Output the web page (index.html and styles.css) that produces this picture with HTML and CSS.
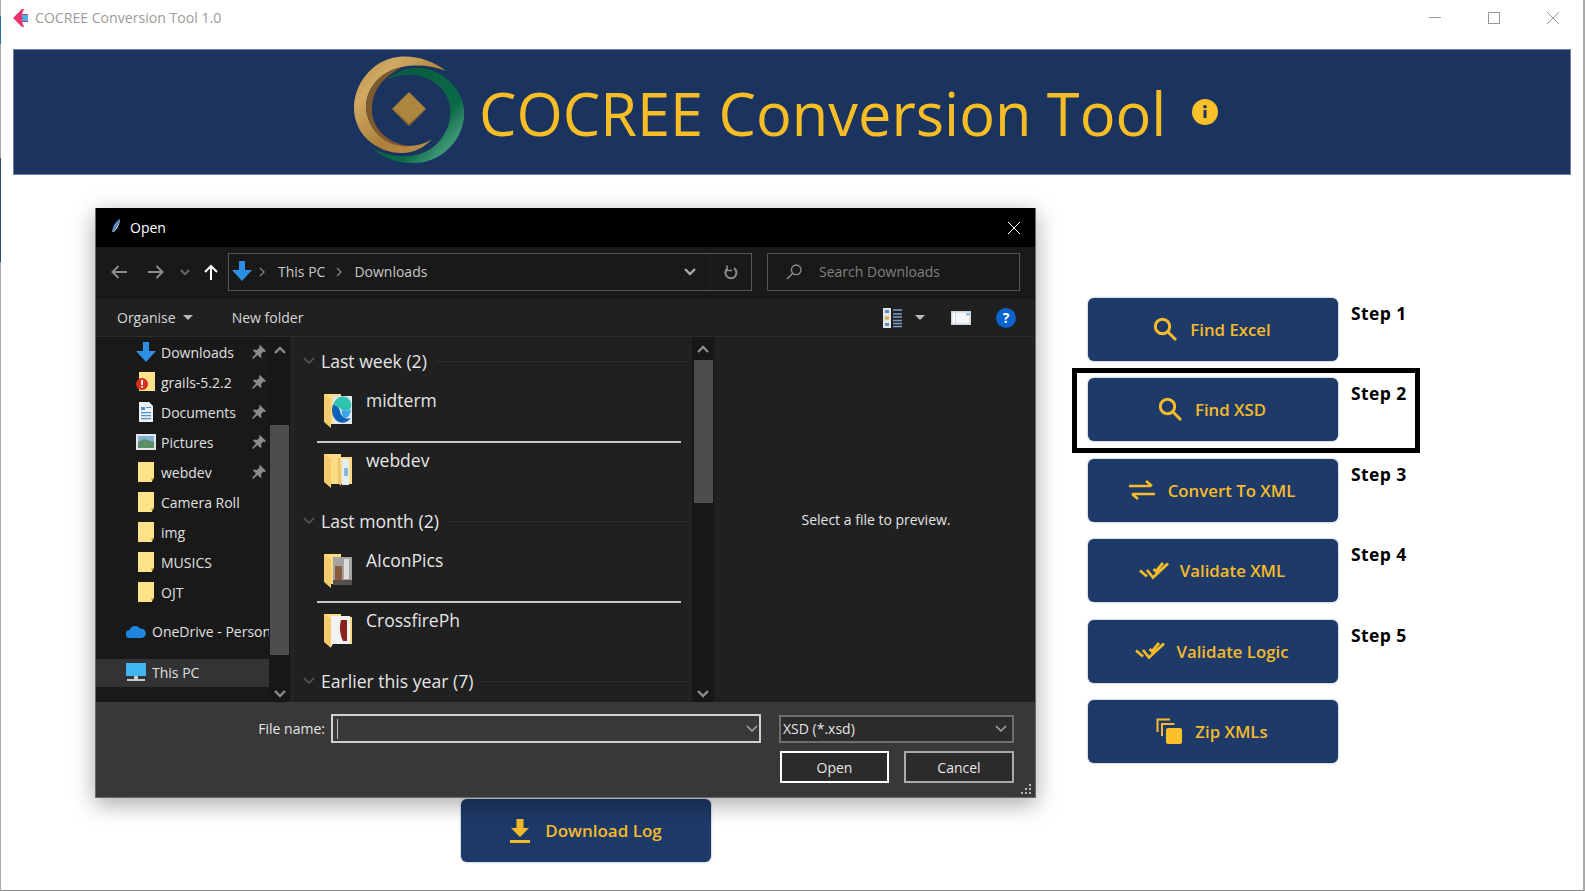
FILE: index.html
```html
<!DOCTYPE html>
<html lang="en">
<head>
<meta charset="utf-8">
<title>COCREE Conversion Tool 1.0</title>
<link rel="stylesheet" href="styles.css">
</head>
<body>
<svg class="defs" width="0" height="0" aria-hidden="true">
  <defs>
    <symbol id="i-folder" viewBox="0 0 16 20"><path d="M0 0h16v16h-2v4H0z" fill="#fde28a"/><path d="M13 16h3l-2 3.500z" fill="#d7ad4a"/></symbol>
    <symbol id="i-pin" viewBox="0 0 14 14"><path d="M8 0l6 6-1 1-1.500-.5L9 9l.5 3-1 1-3-3L1 14l-1-1 4-4.500-3-3 1-1 3 .5L7.500 2.500 7 1z" fill="#8a8a8a"/></symbol>
    <symbol id="i-down" viewBox="0 0 20 20"><path d="M7 0h6v9h7L10 20 0 9h7z" fill="#2b8fe6"/></symbol>
    <symbol id="i-search" viewBox="0 0 24 24"><circle cx="9.500" cy="9.500" r="7.200" fill="none" stroke="#f5bb2a" stroke-width="3"/><path d="M14.800 14.800L23 23" stroke="#f5bb2a" stroke-width="3" fill="none"/></symbol>
    <symbol id="i-check" viewBox="0 0 30 18"><path d="M1 8.500l7 6M8 8l6 7.500L29 1.500M14.500 7l2.500 2.500L24 1" stroke="#f5bb2a" stroke-width="2.800" fill="none"/></symbol>
    <symbol id="i-fback" viewBox="0 0 28 35"><path d="M0 1h17v3h11v27H6z" fill="#fbdc85"/><path d="M0 1l7 5v29L0 29z" fill="#f4cc6c"/></symbol>
    <symbol id="i-chev" viewBox="0 0 12 8"><path d="M1 1l5 5 5-5" fill="none" stroke="currentColor" stroke-width="1.500"/></symbol>
    <symbol id="i-chev-b" viewBox="0 0 12 8"><path d="M1 1l5 5 5-5" fill="none" stroke="currentColor" stroke-width="2.400"/></symbol>
    <symbol id="i-chev-u" viewBox="0 0 12 8"><path d="M1 7l5-5 5 5" fill="none" stroke="currentColor" stroke-width="2.400"/></symbol>
    <symbol id="i-crumb" viewBox="0 0 6 10"><path d="M1 1l4 4-4 4" fill="none" stroke="#7d7d7d" stroke-width="1.400"/></symbol>
  </defs>
</svg>

<div class="window">
  <header class="titlebar">
    <svg class="app-icon" viewBox="0 0 15 18"><path d="M0 9L9 0h2l-2 5 6 0v8H9l2 5H9z" fill="#e8336d"/><path d="M8 6h7v6H8l2-3z" fill="#45b4e8"/></svg>
    <span class="app-title">COCREE Conversion Tool 1.0</span>
    <div class="win-controls">
      <svg viewBox="0 0 12 12"><path d="M0 5.500h12" stroke="#999" stroke-width="1"/></svg>
      <svg viewBox="0 0 12 12"><rect x=".5" y=".5" width="11" height="11" fill="none" stroke="#999"/></svg>
      <svg viewBox="0 0 12 12"><path d="M0 0l12 12M12 0L0 12" stroke="#999" stroke-width="1"/></svg>
    </div>
  </header>

  <section class="banner">
    <svg class="logo" viewBox="350 52 118 114">
      <defs>
        <linearGradient id="gold" x1="0" y1="0" x2="1" y2="1"><stop offset="0" stop-color="#b58c45"/><stop offset=".25" stop-color="#d0a962"/><stop offset=".6" stop-color="#ab7f3a"/><stop offset="1" stop-color="#c2964e"/></linearGradient>
        <linearGradient id="green" x1="0" y1="0" x2="1" y2="1"><stop offset="0" stop-color="#07593c"/><stop offset=".65" stop-color="#0a6a47"/><stop offset=".82" stop-color="#3f9675"/><stop offset="1" stop-color="#0a5f40"/></linearGradient>
      </defs>
      <path d="M386 80C400 68 420 64 436 72C456 82 466 100 464 118C461 144 438 164 412 163C396 163 382 157 372 148C392 159 416 159 432 148C446 137 452 122 450 106C447 88 430 76 414 75C404 74 395 76 386 80Z" fill="url(#green)"/>
      <path d="M446 71C432 60 414 55 398 57C372 60 354 84 354 108C354 134 376 153 402 153C414 153 425 147 432 139C422 146 410 147 398 145C380 142 366 124 366 106C367 86 382 71 402 67C418 64 434 66 446 71Z" fill="url(#gold)"/>
      <path d="M366 106C367 86 382 71 402 67C394 72 373 82 372 108C371 126 386 144 410 146C404 147 401 146 398 145C380 142 366 124 366 106Z" fill="#7f5a2e"/>
      <path d="M409 92l17 17-17 17-17-17z" fill="#ad853c"/>
      <path d="M426 109l-17 17-17-17 1 0 16 15 16-15z" fill="#7e5c2a"/>
    </svg>
    <h1 class="banner-title">COCREE Conversion Tool</h1>
    <svg class="info" viewBox="0 0 26 26"><circle cx="13" cy="13" r="13" fill="#fcc02a"/><rect x="11.500" y="11" width="3" height="8" fill="#1a335f"/><circle cx="13" cy="7.800" r="1.800" fill="#1a335f"/></svg>
  </section>

  <main class="workspace">
    <div class="left-area">
      <button class="action download-btn" type="button">
        <svg class="ico-dl" viewBox="0 0 20 24"><path d="M6.500 0h7v9H19l-9 9-9-9h5.500z" fill="#f5bb2a"/><rect x="0" y="21" width="20" height="3" fill="#f5bb2a"/></svg>
        Download Log
      </button>
    </div>

    <div class="steps">
      <div class="step">
        <button class="action" type="button"><svg class="ico"><use href="#i-search"/></svg>Find Excel</button>
        <span class="step-label">Step 1</span>
      </div>
      <div class="step">
        <div class="highlight"></div>
        <button class="action" type="button"><svg class="ico"><use href="#i-search"/></svg>Find XSD</button>
        <span class="step-label">Step 2</span>
      </div>
      <div class="step">
        <button class="action" type="button">
          <svg class="ico-wide" viewBox="0 0 26 20"><path d="M0 6h22M17 1l6 5M26 14H3M9 19l-6-5" fill="none" stroke="#f5bb2a" stroke-width="2.600"/></svg>
          Convert To XML</button>
        <span class="step-label">Step 3</span>
      </div>
      <div class="step">
        <button class="action" type="button"><svg class="ico-check"><use href="#i-check"/></svg>Validate XML</button>
        <span class="step-label">Step 4</span>
      </div>
      <div class="step">
        <button class="action" type="button"><svg class="ico-check"><use href="#i-check"/></svg>Validate Logic</button>
        <span class="step-label">Step 5</span>
      </div>
      <div class="step">
        <button class="action" type="button">
          <svg class="ico-zip" viewBox="0 0 26 26"><path d="M1.500 14V1.500H14M6 18V6h12.500" fill="none" stroke="#f5bb2a" stroke-width="2"/><rect x="10" y="10" width="16" height="16" rx="2" fill="#fcc02a"/></svg>
          Zip XMLs</button>
      </div>
    </div>

    <div class="dialog">
      <div class="dlg-title">
        <svg class="feather" viewBox="0 0 10 14"><path d="M9 0C5 2 2 6 1 13l1 0C4 9 8 5 9 0z" fill="#4d8fd0"/><path d="M9 0C8 4 5 9 2 13l1 0C6 10 9 5 9 0z" fill="#c8dcef"/></svg>
        <span>Open</span>
        <svg class="dlg-close" viewBox="0 0 12 12"><path d="M0 0l12 12M12 0L0 12" stroke="#fff" stroke-width="1"/></svg>
      </div>

      <div class="dlg-nav">
        <svg class="nav-arrow nav-back" viewBox="0 0 16 14"><path d="M16 7H2M7.500 1L1.500 7l6 6" fill="none" stroke="#8c8c8c" stroke-width="2"/></svg>
        <svg class="nav-arrow nav-fwd" viewBox="0 0 16 14"><path d="M0 7h14M8.500 1l6 6-6 6" fill="none" stroke="#8c8c8c" stroke-width="2"/></svg>
        <svg class="nav-drop"><use href="#i-chev-b"/></svg>
        <svg class="nav-up" viewBox="0 0 14 16"><path d="M7 16V2M1 8l6-6 6 6" fill="none" stroke="#fff" stroke-width="2"/></svg>
        <div class="address">
          <svg class="addr-icon"><use href="#i-down"/></svg>
          <svg class="crumb"><use href="#i-crumb"/></svg>
          <span>This PC</span>
          <svg class="crumb"><use href="#i-crumb"/></svg>
          <span>Downloads</span>
          <svg class="addr-chev"><use href="#i-chev-b"/></svg>
          <div class="addr-refresh">
            <svg viewBox="0 0 14 15"><path d="M3.500 3.500A5.500 5.500 0 1 0 10 3.200" fill="none" stroke="#8c8c8c" stroke-width="2"/><path d="M3 .5v5h5" fill="none" stroke="#8c8c8c" stroke-width="1.600"/></svg>
          </div>
        </div>
        <div class="search">
          <svg viewBox="0 0 16 16"><circle cx="10.200" cy="5.800" r="4.800" fill="none" stroke="#8c8c8c" stroke-width="1.300"/><path d="M6.800 9.200L1 15" stroke="#8c8c8c" stroke-width="1.500"/></svg>
          <span>Search Downloads</span>
        </div>
      </div>

      <div class="dlg-tools">
        <span class="tool-text">Organise</span><i class="caret"></i>
        <span class="tool-text new-folder">New folder</span>
        <svg class="view-icon" viewBox="0 0 20 20"><rect width="8" height="20" fill="#e6e6e6"/><rect x="2" y="2" width="4" height="3" fill="#5a8fc8"/><rect x="2" y="8.500" width="4" height="3" fill="#d6a548"/><rect x="2" y="15" width="4" height="3" fill="#5a8fc8"/><path d="M10 2h9M10 6h9M10 9h9M10 12.500h9M10 15.500h9M10 18.500h9" stroke="#7e9fc8" stroke-width="1.400"/></svg>
        <i class="caret caret-view"></i>
        <svg class="pane-icon" viewBox="0 0 20 14"><rect width="20" height="14" fill="#cfd3d8"/><rect x="5" y="1.500" width="13.500" height="11" fill="#f4f7fb"/><rect x="1.500" y="1.500" width="2.500" height="11" fill="#fff"/><rect x="15.500" y="2" width="3" height="2.500" fill="#7fb0e6"/></svg>
        <svg class="help-icon" viewBox="0 0 20 20"><circle cx="10" cy="10" r="10" fill="#0a63cf"/><text x="10" y="15" text-anchor="middle" class="help-q">?</text></svg>
      </div>

      <div class="dlg-body">
        <nav class="tree">
          <ul class="tree-list">
            <li class="tree-row"><svg class="tree-ico"><use href="#i-down"/></svg><span>Downloads</span><svg class="pin"><use href="#i-pin"/></svg></li>
            <li class="tree-row">
              <svg class="tree-ico" viewBox="0 0 20 20"><path d="M3 0h16v19H3z" fill="#fde28a"/><circle cx="6" cy="12" r="6" fill="#d6301f"/><rect x="5.200" y="8" width="1.800" height="5" fill="#fff"/><rect x="5.200" y="14" width="1.800" height="1.800" fill="#fff"/></svg>
              <span>grails-5.2.2</span><svg class="pin"><use href="#i-pin"/></svg></li>
            <li class="tree-row">
              <svg class="tree-ico" viewBox="0 0 20 20"><path d="M3 0h10l4 4v16H3z" fill="#eef0f3"/><path d="M5 5h4v3H5zM10 5h5v1H10zM5 10h10v1.200H5zM5 13h10v1.200H5zM5 16h10v1.200H5z" fill="#4f93cf"/></svg>
              <span>Documents</span><svg class="pin"><use href="#i-pin"/></svg></li>
            <li class="tree-row">
              <svg class="tree-ico" viewBox="0 0 20 20"><rect y="2" width="20" height="16" fill="#e4e6ea"/><rect x="2" y="4" width="16" height="12" fill="#7fb2d9"/><path d="M2 10l6-3 10 3v6H2z" fill="#5d8f66"/></svg>
              <span>Pictures</span><svg class="pin"><use href="#i-pin"/></svg></li>
            <li class="tree-row"><svg class="tree-ico tree-folder"><use href="#i-folder"/></svg><span>webdev</span><svg class="pin"><use href="#i-pin"/></svg></li>
            <li class="tree-row"><svg class="tree-ico tree-folder"><use href="#i-folder"/></svg><span>Camera Roll</span></li>
            <li class="tree-row"><svg class="tree-ico tree-folder"><use href="#i-folder"/></svg><span>img</span></li>
            <li class="tree-row"><svg class="tree-ico tree-folder"><use href="#i-folder"/></svg><span>MUSICS</span></li>
            <li class="tree-row"><svg class="tree-ico tree-folder"><use href="#i-folder"/></svg><span>OJT</span></li>
            <li class="tree-row tree-root tree-gap">
              <svg class="tree-ico" viewBox="0 0 20 14"><path d="M4 14a4 4 0 0 1-.5-8A6 6 0 0 1 14 4.500 4.800 4.800 0 0 1 16 14z" fill="#1f86e0"/></svg>
              <span>OneDrive - Personal</span></li>
            <li class="tree-row tree-root tree-selected">
              <svg class="tree-ico" viewBox="0 0 20 20"><rect y="1" width="20" height="13" fill="#3fb6f2"/><rect x="8" y="14" width="4" height="3" fill="#c8ccd2"/><rect x="1" y="17" width="18" height="2" fill="#c8ccd2"/></svg>
              <span>This PC</span></li>
          </ul>
          <div class="scrollbar tree-bar">
            <svg class="bar-arrow"><use href="#i-chev-u"/></svg>
            <div class="thumb tree-thumb"></div>
            <svg class="bar-arrow"><use href="#i-chev-b"/></svg>
          </div>
        </nav>

        <div class="files">
          <div class="file-list">
            <div class="group-head"><svg class="group-chev"><use href="#i-chev"/></svg><span>Last week (2)</span><i class="group-rule"></i></div>
            <div class="file file-sel">
              <svg class="file-ico" viewBox="0 0 28 35"><use href="#i-fback"/><rect x="9" y="3" width="19" height="28" fill="#dfe8ee"/><path d="M9 12C11 5 17 2 22 4c4 2 6 6 5 10-1 4-6 5-9 3-3-3-6-5-9-5z" fill="#2fc4b0"/><path d="M9 12c3 0 6 2 7 6 1 6 6 9 11 7-3 4-8 6-12 4-4-2-7-6-7-12 0-2 .5-4 1-5z" fill="#0d63b8"/><path d="M18 17c3 2 7 1 9-1-.5 4-2 8-5 9-3 0-5-4-4-8z" fill="#3aa3ea"/></svg>
              <span>midterm</span>
            </div>
            <div class="file">
              <svg class="file-ico" viewBox="0 0 28 35"><use href="#i-fback"/><path d="M14 6l2-2 1 29-3-3z" fill="#e8c46c"/><rect x="18" y="6" width="7" height="26" fill="#e4edf2"/><rect x="20" y="15" width="4" height="8" fill="#8bb8d8"/></svg>
              <span>webdev</span>
            </div>
            <div class="group-head"><svg class="group-chev"><use href="#i-chev"/></svg><span>Last month (2)</span><i class="group-rule"></i></div>
            <div class="file file-sel">
              <svg class="file-ico" viewBox="0 0 28 35"><use href="#i-fback"/><rect x="9" y="4" width="19" height="28" fill="#a5a3a0"/><rect x="11" y="13" width="7" height="16" fill="#8c5a3e"/><rect x="20" y="6" width="5" height="20" fill="#dcdcdc"/><rect x="9" y="27" width="19" height="5" fill="#55504c"/></svg>
              <span>AIconPics</span>
            </div>
            <div class="file">
              <svg class="file-ico" viewBox="0 0 28 35"><path d="M0 1h17v3h11v27H6z" fill="#fbdc85"/><path d="M0 1l7 5v29L0 29z" fill="#f4cc6c"/><path d="M7 3h19v28H9l-2 3z" fill="#f2f2f2"/><path d="M17 7h6v21h-4c-3-6-4-14-2-21z" fill="#8a2320"/></svg>
              <span>CrossfirePh</span>
            </div>
            <div class="group-head"><svg class="group-chev"><use href="#i-chev"/></svg><span>Earlier this year (7)</span><i class="group-rule"></i></div>
          </div>
          <div class="scrollbar list-bar">
            <svg class="bar-arrow"><use href="#i-chev-u"/></svg>
            <div class="thumb list-thumb"></div>
            <svg class="bar-arrow"><use href="#i-chev-b"/></svg>
          </div>
        </div>

        <div class="preview">Select a file to preview.</div>
      </div>

      <div class="dlg-foot">
        <div class="foot-row">
          <label class="fname-label">File name:</label>
          <div class="fname-input"><i class="text-caret"></i><svg class="combo-chev"><use href="#i-chev"/></svg></div>
          <div class="type-select"><span>XSD (*.xsd)</span><svg class="combo-chev"><use href="#i-chev"/></svg></div>
        </div>
        <div class="foot-buttons">
          <button class="dlg-btn dlg-btn-primary" type="button">Open</button>
          <button class="dlg-btn dlg-btn-cancel" type="button">Cancel</button>
        </div>
        <svg class="grip" viewBox="0 0 10 10"><path d="M8 0h2v2H8zM4 4h2v2H4zM8 4h2v2H8zM0 8h2v2H0zM4 8h2v2H4zM8 8h2v2H8z" fill="#b5b5b5"/></svg>
      </div>
    </div>
  </main>
</div>
</body>
</html>
```

FILE: styles.css
```css
* { box-sizing: border-box; }
html, body { margin: 0; padding: 0; height: 100%; background: #fff; overflow: hidden; }
body { font-family: "Open Sans", "Noto Sans", sans-serif; }
.defs { position: absolute; }

.window {
  width: 1585px;
  height: 891px;
  border-left: 1px solid #a8a8a8;
  border-right: 2px solid #a8a8a8;
  border-bottom: 1px solid #8f8f8f;
  display: flex;
  flex-direction: column;
  position: relative;
  background: #fff;
}
/* sliver of the desktop showing beside the window frame */
.window::before {
  content: "";
  position: absolute;
  left: -1px;
  top: 0;
  width: 1px;
  height: 280px;
  background: linear-gradient(to bottom, #a8a8a8 16px, #2a75a8 16px, #2a75a8 44px, #a8a8a8 44px, #a8a8a8 158px, #2f4a6e 158px, #2f4a6e 262px, #a8a8a8 262px);
}

/* title bar */
.titlebar { height: 49px; display: flex; align-items: flex-start; padding: 9px 0 0 12px; flex: none; }
.app-icon { width: 15px; height: 18px; flex: none; }
.app-title { margin-left: 7px; font-size: 14.100px; line-height: 18px; color: #9a9a9a; }
.win-controls { margin-left: auto; display: flex; gap: 47px; padding: 3px 24px 0 0; }
.win-controls svg { width: 12px; height: 12px; display: block; }

/* banner */
.banner {
  height: 126px;
  margin: 0 12px;
  flex: none;
  background: #1a335f;
  border: 1px solid #6f7f9e;
  display: flex;
  align-items: center;
  padding-left: 336px;
}
.logo { width: 118px; height: 114px; flex: none; margin: -7px 11px 0 0; }
.banner-title { margin: 2px 0 0; font-size: 59.500px; line-height: 80px; font-weight: 400; color: #f7bd25; white-space: nowrap; }
.info { width: 26px; height: 26px; margin: 0 0 0 26px; flex: none; }

/* workspace */
.workspace { flex: 1; position: relative; display: flex; }
.left-area { width: 1087px; flex: none; position: relative; padding: 624px 0 0 460px; }
.steps { display: flex; flex-direction: column; gap: 17.400px; padding-top: 123px; }
.step { display: flex; position: relative; align-items: flex-start; }
.action {
  width: 250px;
  height: 63px;
  border: 0;
  border-radius: 6px;
  background: #1e3a68;
  box-shadow: 0 0 2px rgba(30, 58, 104, .6);
  color: #f5bb2a;
  font: 600 16.800px "Open Sans", "Noto Sans", sans-serif;
  display: flex;
  align-items: center;
  justify-content: center;
  padding: 0 2px 0 0;
  gap: 13px;
}
.download-btn { font-size: 17px; gap: 15px; padding: 0; }
.ico { width: 24px; height: 24px; flex: none; margin-bottom: 2px; }
.ico-wide { width: 26px; height: 20px; flex: none; }
.ico-check { width: 30px; height: 18px; flex: none; margin-right: -2px; }
.ico-zip { width: 26px; height: 26px; flex: none; }
.ico-dl { width: 20px; height: 24px; flex: none; }
.step-label { margin: 4px 0 0 13px; font-size: 17.500px; letter-spacing: .4px; line-height: 22px; font-weight: 700; color: #000; }
.highlight {
  position: absolute;
  left: -16px;
  top: -10px;
  width: 348px;
  height: 85px;
  border: 5px solid #000;
  pointer-events: none;
}

/* dialog */
.dialog {
  position: absolute;
  left: 94px;
  top: 33px;
  width: 941px;
  height: 590px;
  display: flex;
  flex-direction: column;
  background: #202020;
  border: 1px solid #6b6b6b;
  border-top: 0;
  box-shadow: 0 6px 22px rgba(0, 0, 0, .35);
  color: #e6e6e6;
  font-size: 14px;
  overflow: hidden;
}
.dlg-title { height: 39px; flex: none; background: #000; color: #fff; display: flex; align-items: center; padding: 0 14px; font-size: 14px; }
.feather { width: 10px; height: 14px; margin: -4px 0 0 1px; }
.dlg-title span { margin-left: 9px; }
.dlg-close { width: 12px; height: 12px; margin-left: auto; margin-right: 1px; }

.dlg-nav { height: 52px; flex: none; background: #191919; display: flex; align-items: center; position: relative; color: #c8c8c8; padding-bottom: 2px; }
.nav-arrow { width: 16px; height: 14px; flex: none; }
.nav-back { margin-left: 15px; }
.nav-fwd { margin-left: 21px; }
.nav-drop { width: 10px; height: 7px; margin-left: 16px; color: #666; flex: none; }
.nav-up { width: 14px; height: 16px; margin-left: 14px; flex: none; }
.address { width: 524px; height: 38px; margin-left: 10px; border: 1px solid #555; display: flex; align-items: center; padding-left: 3px; flex: none; }
.addr-icon { width: 20px; height: 20px; flex: none; margin-bottom: 2px; }
.crumb { width: 6px; height: 10px; margin: 0 13px 0 7px; flex: none; }
.crumb + span + .crumb { margin-left: 11px; margin-right: 12px; }
.address span { font-size: 14px; padding-bottom: 2px; }
.addr-chev { width: 12px; height: 8px; margin-left: auto; margin-right: 14px; color: #a8a8a8; flex: none; }
.addr-refresh { width: 41px; height: 36px; border-left: 1px solid #232323; display: flex; align-items: center; justify-content: center; flex: none; }
.addr-refresh svg { width: 14px; height: 15px; }
.search { width: 253px; height: 38px; margin-left: 15px; border: 1px solid #555; display: flex; align-items: center; padding-left: 18px; color: #808080; flex: none; }
.search svg { width: 16px; height: 16px; flex: none; }
.search span { margin-left: 17px; font-size: 14px; padding-bottom: 2px; }

.dlg-tools { height: 38px; flex: none; background: #202020; border-bottom: 1px solid #2b2b2b; display: flex; align-items: center; padding-left: 21px; color: #d8d8d8; }
.tool-text { font-size: 14px; }
.caret { width: 0; height: 0; border: 5px solid transparent; border-top: 5px solid #bbb; border-bottom: 0; margin-left: 7px; flex: none; }
.new-folder { margin-left: 39px; }
.view-icon { width: 20px; height: 20px; margin-left: auto; flex: none; }
.caret-view { margin-left: 12px; }
.pane-icon { width: 20px; height: 14px; margin-left: 26px; flex: none; }
.help-icon { width: 20px; height: 20px; margin-left: 25px; margin-right: 19px; flex: none; }
.help-q { font: 700 14px "Open Sans", sans-serif; fill: #fff; }

.dlg-body { flex: 1; min-height: 0; display: flex; }
.tree { width: 198px; flex: none; display: flex; background: #191919; border-right: 4px solid #232323; }
.tree-list { list-style: none; margin: 0; padding: 0; width: 174px; flex: none; overflow: hidden; }
.tree-row { height: 30px; display: flex; align-items: center; padding-left: 41px; white-space: nowrap; font-size: 14px; color: #e0e0e0; }
.tree-root { padding-left: 31px; height: 28px; }
.tree-gap { margin-top: 10px; }
.tree-selected { background: #333; margin-top: 14px; padding-bottom: 2px; }
.tree-ico { width: 20px; height: 20px; flex: none; margin-right: 5px; margin-left: -1px; }
.tree-root .tree-ico { margin-right: 6px; }
.tree-folder { width: 16px; height: 20px; margin-left: 1px; margin-right: 7px; }
.pin { width: 14px; height: 14px; margin-left: auto; margin-right: 4px; flex: none; }
.scrollbar { display: flex; flex-direction: column; align-items: center; justify-content: space-between; flex: none; background: #171717; padding: 9px 0 4px; color: #8c8c8c; }
.tree-bar { width: 21px; margin-left: -1px; }
.list-bar { width: 22px; padding: 8px 0 4px; }
.bar-arrow { width: 12px; height: 8px; flex: none; }
.thumb { width: 19px; background: #4d4d4d; flex: none; }
.tree-thumb { height: 230px; margin: 71px 0 auto; }
.list-thumb { height: 143px; margin: 7px 0 auto; }

.files { width: 421px; flex: none; display: flex; }
.file-list { width: 398px; flex: none; padding: 9px 0 0 18px; overflow: hidden; }
.group-head { height: 30px; display: flex; align-items: center; margin-top: 3px; font-size: 17.600px; color: #e6e6e6; white-space: nowrap; }
.group-head:first-child { margin-top: 0; }
.group-chev { width: 14px; height: 8px; color: #5c5c5c; margin-right: 5px; flex: none; margin-left: -10px; }
.group-rule { flex: 1; height: 1px; background: #2e2e2e; margin: 0 4px 0 9px; }
.file { height: 60px; width: 364px; margin: 7px 0 0 5px; display: flex; align-items: flex-start; font-size: 17.500px; line-height: 34px; color: #e6e6e6; padding-left: 7px; }
.file + .file { margin-top: 0; }
.file-sel { border-bottom: 2px solid #c8c8c8; }
.file-ico { width: 28px; height: 35px; margin: 10px 14px 0 0; flex: none; }

.preview { flex: 1; display: flex; align-items: center; justify-content: center; font-size: 14px; padding: 0 0 1px 2px; color: #e6e6e6; }

.dlg-foot { height: 95px; flex: none; background: #383838; position: relative; padding: 12px 21px 0 0; display: flex; flex-direction: column; align-items: flex-end; }
.foot-row { display: flex; align-items: center; height: 29px; }
.fname-label { font-size: 14px; margin-right: 6px; color: #e6e6e6; }
.fname-input { width: 430px; height: 29px; border: 2px solid #d0d0d0; position: relative; display: flex; align-items: center; padding-left: 4px; }
.text-caret { width: 1px; height: 20px; background: #bbb; }
.combo-chev { width: 12px; height: 8px; color: #a8a8a8; margin-left: auto; margin-right: 1px; flex: none; }
.type-select { width: 235px; height: 28px; margin-left: 18px; background: #2b2b2b; border: 2px solid #6f6f6f; display: flex; align-items: center; padding: 0 4px 0 2px; font-size: 14px; color: #e6e6e6; }
.foot-buttons { display: flex; gap: 15px; margin-top: 8px; }
.dlg-btn { width: 109px; height: 32px; background: #2b2b2b; border: 2px solid #aaa; color: #e6e6e6; font: 14px "Open Sans", "Noto Sans", sans-serif; padding: 0; }
.dlg-btn-primary { border-color: #fff; }
.dlg-btn-cancel { width: 110px; }
.grip { position: absolute; right: 4px; bottom: 3px; width: 10px; height: 10px; }
```
